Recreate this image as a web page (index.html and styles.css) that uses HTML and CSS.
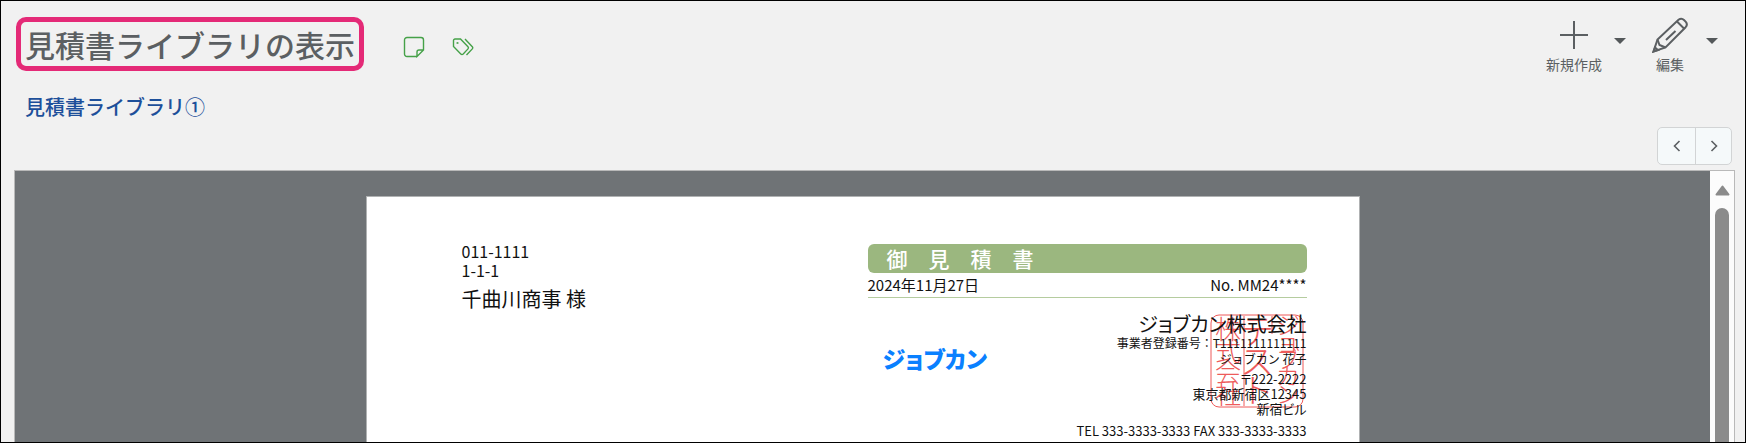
FILE: index.html
```html
<!DOCTYPE html>
<html lang="ja">
<head>
    <meta charset="UTF-8">
    <meta name="viewport" content="width=device-width, initial-scale=1.0">
    <title>見積書ライブラリの表示</title>
    <link rel="stylesheet" href="styles.css">
</head>
<body>

    <header class="page-header">
        <div class="title-row">
            <h1>見積書ライブラリの表示</h1>
            <button class="icon-button" aria-label="メモ">
                <svg width="22" height="22" viewBox="0 0 22 22">
                    <path d="M14 20.500H4A2.500 2.500 0 0 1 1.500 18V4A2.500 2.500 0 0 1 4 1.500H18A2.500 2.500 0 0 1 20.500 4V14L14 20.500V16A2 2 0 0 1 16 14H20.500"/>
                </svg>
            </button>
            <button class="icon-button" aria-label="タグ">
                <svg width="22" height="22" viewBox="0 0 22 22">
                    <path d="M1.500 4.500A1.500 1.500 0 0 1 3 3H8.500L16 10.700Q17 11.800 16 12.900L11.200 18Q10 19.200 8.800 18L1.500 10.500Z"/>
                    <path d="M13 3L20.300 10.700Q21.200 11.800 20.300 12.900L14.500 19"/>
                    <circle cx="5.500" cy="7" r="0.400"/>
                </svg>
            </button>
        </div>
        <div class="actions">
            <button class="action">
                <svg width="36" height="36" viewBox="0 0 36 36">
                    <path d="M18 4V32M4 18H32"/>
                </svg>
                <span>新規作成</span>
            </button>
            <button class="caret" aria-label="新規作成メニュー"></button>
            <button class="action edit">
                <svg width="36" height="36" viewBox="0 0 36 36">
                    <path d="M1.500 34.500L5.500 22.500L26.500 2.800Q29.500 .5 32 3L33.800 4.800Q36 7.500 33.600 10.200L13.500 30.500Z"/>
                    <path d="M5.500 22.500L7.500 28L13.500 30.500M25 4.500L32.500 12M14 23L23.500 14"/>
                    <path d="M1.500 34.500L3 30.500L6 33Z"/>
                </svg>
                <span>編集</span>
            </button>
            <button class="caret" aria-label="編集メニュー"></button>
        </div>
    </header>

    <a class="record-name" href="#">見積書ライブラリ①</a>

    <nav class="pager">
        <button aria-label="前へ"><svg width="8" height="12" viewBox="0 0 8 12"><path d="M6.500 1L1.500 6L6.500 11"/></svg></button>
        <button aria-label="次へ"><svg width="8" height="12" viewBox="0 0 8 12"><path d="M1.500 1L6.500 6L1.500 11"/></svg></button>
    </nav>

    <main class="viewer">
        <div class="canvas">
            <article class="paper">
                <section class="customer">
                    <p>011-1111</p>
                    <p>1-1-1</p>
                    <p class="customer-name">千曲川商事 様</p>
                </section>
                <section class="quote">
                    <h2>御　見　積　書</h2>
                    <div class="quote-meta">
                        <span>2024年11月27日</span>
                        <span>No. MM24****</span>
                    </div>
                    <div class="issuer">
                        <div class="logo">ジョブカン</div>
                        <div class="issuer-info">
                            <svg class="seal" width="94" height="94" viewBox="0 0 94 94" aria-hidden="true">
                                <rect x="1" y="1" width="92" height="92" rx="8"/>
                                <path d="M34 2V92M62 2V20"/>
                                <text font-size="26" x="5 5 5 5" y="25 47 68 90">株式会社</text>
                                <text font-size="34" x="30 30 30" y="30 60 89">テスト</text>
                                <text font-size="24" x="66 66 66 66 66" y="20 37 54 71 89">ジョブカン</text>
                            </svg>
                            <p class="company">ジョブカン株式会社</p>
                            <p>事業者登録番号：T1111111111111</p>
                            <p>ジョブカン 花子</p>
                            <address>
                                〒222-2222<br>
                                東京都新宿区12345<br>
                                新宿ビル
                            </address>
                            <p class="phone">TEL 333-3333-3333 FAX 333-3333-3333</p>
                        </div>
                    </div>
                </section>
            </article>
        </div>
        <div class="scrollbar">
            <svg width="15" height="11" viewBox="0 0 15 11"><path d="M7.500 1.500L13.500 9.500H1.500Z"/></svg>
            <div class="thumb"></div>
        </div>
    </main>

</body>
</html>
```
FILE: styles.css
```css
* {
    box-sizing: border-box;
}

body {
    margin: 0;
    height: 100vh;
    display: flex;
    flex-direction: column;
    overflow: hidden;
    border: 1px solid #000;
    background-color: #f1f1f1;
    color: #5b5f62;
    font-family: "Noto Sans CJK JP", sans-serif;
}

h1, h2, p {
    margin: 0;
    font-weight: normal;
}

button {
    padding: 0;
    border: none;
    background: none;
    color: inherit;
    font-family: inherit;
    cursor: pointer;
}

svg {
    display: block;
    fill: none;
    stroke: currentColor;
}

.page-header {
    display: flex;
    justify-content: space-between;
    align-items: flex-start;
    padding: 16px 27px 0 15px;
}

.title-row {
    display: flex;
    align-items: center;
}

h1 {
    margin-right: 39px;
    padding: 0 4px;
    border: 5px solid #e42a77;
    border-radius: 10px;
    font-size: 30px;
    font-weight: 500;
    line-height: 44px;
}

.icon-button {
    margin-right: 27px;
    padding-top: 6px;
    color: #45a148;
    stroke-width: 1.4;
}

.actions {
    display: flex;
}

.action {
    display: flex;
    flex-direction: column;
    align-items: center;
    font-size: 14px;
    line-height: 20px;
    gap: 1px;
}

.action svg {
    stroke-width: 2;
}

.caret {
    width: 12px;
    height: 6px;
    margin: 21px 0 0 12px;
    background-color: #54585a;
    clip-path: polygon(0 0, 100% 0, 50% 100%);
}

.edit {
    margin-left: 26px;
}

.edit + .caret {
    margin-left: 18px;
}

.record-name {
    align-self: flex-start;
    margin: 18px 0 0 24px;
    color: #1d4f9a;
    font-size: 20px;
    font-weight: 500;
    line-height: 30px;
    text-decoration: none;
}

.pager {
    align-self: flex-end;
    display: flex;
    margin: 5px 13px 5px 0;
    border: 1px solid #d2d4d5;
    border-radius: 5px;
    background-color: #f5f9fa;
}

.pager button {
    display: flex;
    justify-content: center;
    align-items: center;
    width: 37px;
    height: 36px;
}

.pager button + button {
    width: 36px;
    border-left: 1px solid #d2d4d5;
}

.pager svg {
    stroke-width: 1.6;
}

.viewer {
    flex: 1;
    min-height: 0;
    display: flex;
    margin: 0 10px 0 13px;
    overflow: hidden;
    border: 1px solid #b9b9b9;
    border-bottom: none;
}

.canvas {
    flex: 1;
    padding-top: 25px;
    background-color: #6f7376;
}

.paper {
    display: flex;
    justify-content: space-between;
    width: 994px;
    max-width: 100%;
    min-height: 1400px;
    margin: 0 auto;
    padding: 45px 52px 0 95px;
    border: 1px solid #b0b2b3;
    background-color: #fff;
    color: #111;
}

.customer {
    font-size: 16px;
    line-height: 19px;
}

.customer-name {
    padding-top: 4px;
    font-size: 20px;
    line-height: 30px;
}

.quote {
    width: 439px;
    padding-top: 2px;
}

h2 {
    padding-left: 19px;
    border-radius: 6px;
    background-color: #9bb77f;
    color: #fff;
    font-size: 21px;
    font-weight: 500;
    line-height: 29px;
}

.quote-meta {
    display: flex;
    justify-content: space-between;
    border-bottom: 1px solid #b5cc9f;
    font-size: 15px;
    line-height: 24px;
}

.issuer {
    display: flex;
    justify-content: space-between;
    padding-top: 15px;
}

.logo {
    padding: 30px 0 0 15px;
    color: #0a80ff;
    font-size: 23px;
    font-weight: 900;
    line-height: 30px;
    font-feature-settings: "palt";
}

.issuer-info {
    position: relative;
    font-size: 12px;
    line-height: 16px;
    text-align: right;
}

.issuer-info p,
.issuer-info address {
    position: relative;
}

.issuer-info .company {
    font-size: 20px;
    line-height: 22px;
    font-feature-settings: "palt";
}

address {
    padding: 4px 0 7px;
    font-size: 13px;
    font-style: normal;
    line-height: 15px;
    font-feature-settings: "palt";
}

.phone {
    font-size: 13px;
}

/* company stamp, sits under the issuer text */
.seal {
    position: absolute;
    top: 1px;
    right: 3px;
    overflow: visible;
    color: #ee5b5b;
    stroke-width: 1;
}

.seal text {
    fill: currentColor;
    stroke: none;
    font-weight: 300;
}

.scrollbar {
    display: flex;
    flex-direction: column;
    align-items: center;
    gap: 12px;
    width: 24px;
    padding-top: 14px;
    background-color: #fcfcfc;
    color: #8b8b8b;
}

.scrollbar svg {
    flex: none;
    fill: currentColor;
    stroke-width: 2;
    stroke-linejoin: round;
}

.thumb {
    width: 14px;
    flex: 1;
    border-radius: 7px 7px 0 0;
    background-color: #8b8b8b;
}
```
